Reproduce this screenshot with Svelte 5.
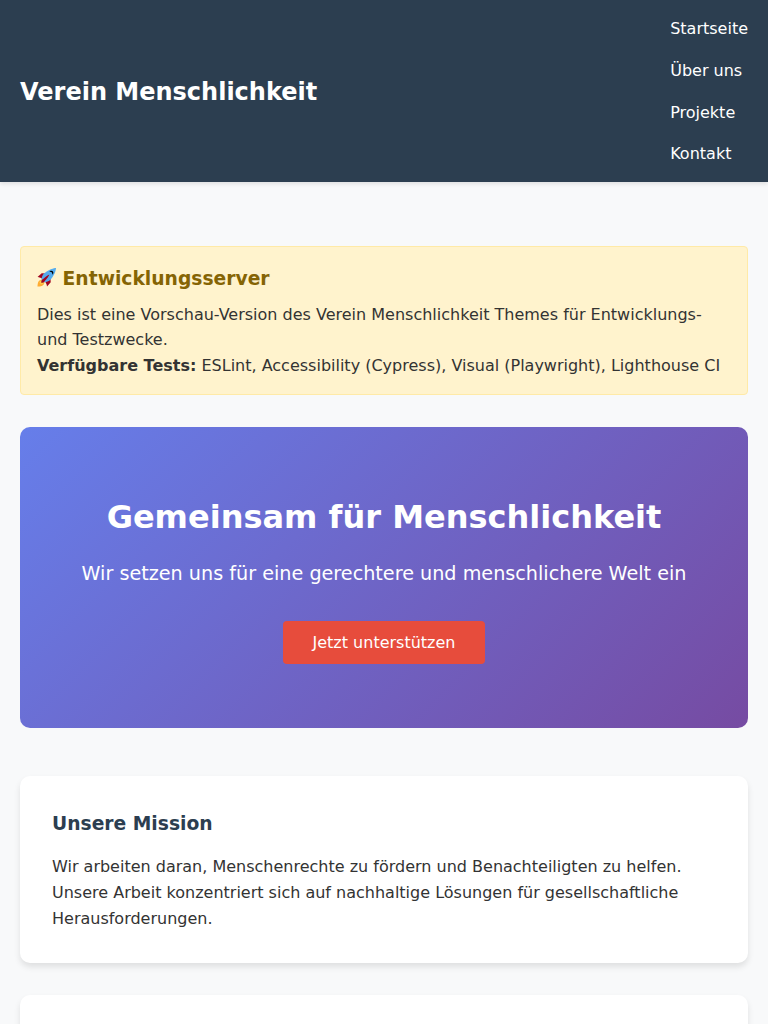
<script>
  const links = ['Startseite', 'Über uns', 'Projekte', 'Kontakt'];
</script>

<header>
  <div class="nav-container">
    <div class="logo">Verein Menschlichkeit</div>
    <nav>
      <ul>
        {#each links as link}
          <li><a href="#top">{link}</a></li>
        {/each}
      </ul>
    </nav>
  </div>
</header>

<main>
  <div class="notice">
    <h3>
      <svg class="rocket" viewBox="0 0 36 36" aria-hidden="true">
        <path fill="#A0041E" d="M1 17l8-7 16 1 1 16-7 8s.001-5.999-6-12-12-6-12-6z" />
        <path fill="#FFAC33" d="M.973 35s-.036-7.979 2.985-11S15 21.187 15 21.187 14.999 29 11.999 32c-3 3-11.026 3-11.026 3z" />
        <circle fill="#FFCC4D" cx="8.999" cy="27" r="4" />
        <path fill="#55ACEE" d="M35.999 0s-10 0-22 10c-6 5-6 14-4 16s10 2 16-4c10-12 10-22 10-22z" />
        <path d="M26.999 5c-1.623 0-3.013.971-3.641 2.36.502-.227 1.055-.36 1.641-.36 2.209 0 4 1.791 4 4 0 .586-.133 1.139-.359 1.64 1.389-.627 2.359-2.017 2.359-3.64 0-2.209-1.791-4-4-4z" />
        <path fill="#A0041E" d="M8 28s0-4 1-5 13.001-10.999 14-10-9.001 13-10.001 14S8 28 8 28z" />
      </svg>
      <span>Entwicklungsserver</span>
    </h3>
    <p>Dies ist eine Vorschau-Version des Verein Menschlichkeit Themes für Entwicklungs- und Testzwecke.</p>
    <p><strong>Verfügbare Tests:</strong> ESLint, Accessibility (Cypress), Visual (Playwright), Lighthouse CI</p>
  </div>

  <section class="hero">
    <h1>Gemeinsam für Menschlichkeit</h1>
    <p>Wir setzen uns für eine gerechtere und menschlichere Welt ein</p>
    <button>Jetzt unterstützen</button>
  </section>

  <section class="cards">
    <article class="card">
      <h3>Unsere Mission</h3>
      <p>Wir arbeiten daran, Menschenrechte zu fördern und Benachteiligten zu helfen. Unsere Arbeit konzentriert sich auf nachhaltige Lösungen für gesellschaftliche Herausforderungen.</p>
    </article>
    <article class="card next"></article>
  </section>
</main>

<style>
  :global(*) { margin: 0; padding: 0; box-sizing: border-box; }
  :global(body) {
    height: 1024px;
    overflow: hidden;
    font-family: "DejaVu Sans", sans-serif;
    font-size: 16px;
    line-height: 1.6;
    color: #333;
    background: #f8f9fa;
  }
  header { background: #2c3e50; color: #fff; padding: 16.4px 0 15.6px; box-shadow: 0 2px 4px rgba(0,0,0,.1); }
  .nav-container { display: flex; justify-content: space-between; align-items: center; padding: 0 20px; }
  .logo { font-size: 24px; font-weight: bold; padding-top: .4px; }
  ul { list-style: none; display: flex; flex-direction: column; gap: 16px; }
  li a { color: #fff; text-decoration: none; }
  main { padding: 64px 20px 0; }
  .notice { background: #fff3cd; border: 1px solid #ffeaa7; border-radius: 4px; padding: 16.4px 16px 15.6px; margin-bottom: 32px; }
  .notice h3 { display: flex; align-items: center; gap: 6.6px; color: #856404; margin-bottom: 8px; font-size: 18.72px; }
  .rocket { width: 19px; height: 19px; flex: none; margin-bottom: 2px; }
  .hero { background: linear-gradient(135deg, #667eea 0%, #764ba2 100%); color: #fff; text-align: center; padding: 65px 32px 63.6px; border-radius: 10px; margin-bottom: 48px; }
  .hero h1 { font-size: 32px; margin-bottom: 15.4px; }
  .hero p { font-size: 19.2px; margin-bottom: 31.6px; }
  button { display: block; margin: 0 auto .4px; height: 43px; border: 0; background: #e74c3c; color: #fff; padding: 12px 29.3px; border-radius: 4px; font: 16px "DejaVu Sans", sans-serif; }
  .cards { display: grid; gap: 32px; }
  .card { background: #fff; padding: 33px 32px 31.4px; border-radius: 10px; box-shadow: 0 4px 6px rgba(0,0,0,.1); }
  .card h3 { color: #2c3e50; font-size: 18.72px; margin-bottom: 15.6px; }
  .next { height: 187px; }
</style>
